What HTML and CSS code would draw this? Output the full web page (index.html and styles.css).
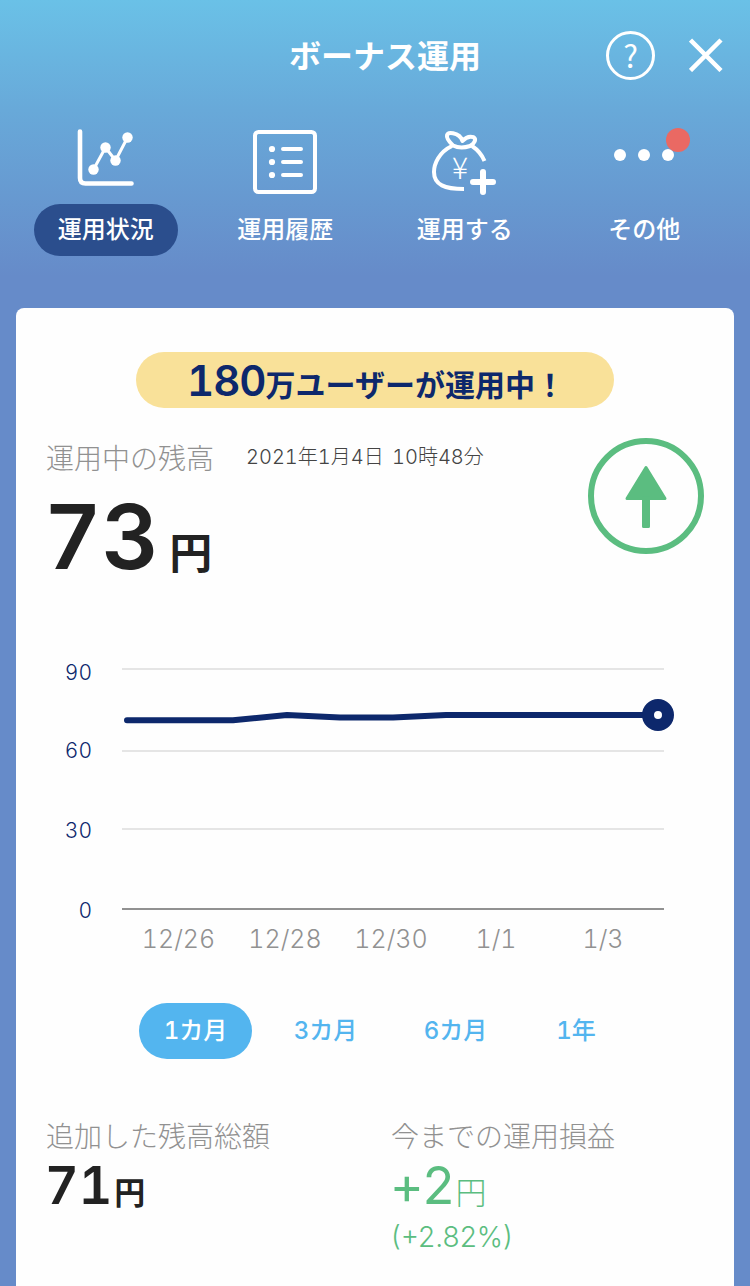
FILE: index.html
```html
<!DOCTYPE html>
<html lang="ja">

<head>
    <meta charset="UTF-8">
    <meta name="viewport" content="width=device-width, initial-scale=1.0">
    <title>ボーナス運用</title>
    <link rel="stylesheet" href="styles.css">
</head>

<body>
    <header class="header">
        <div class="title-bar">
            <h1 class="title">ボーナス運用</h1>
            <div class="title-actions">
                <button class="help">?</button>
                <button class="close">
                    <svg width="34" height="34" viewBox="0 0 34 34">
                        <path d="M1.500 2L32 32.500M32 2L1.500 32.500" />
                    </svg>
                </button>
            </div>
        </div>

        <nav class="menu">
            <a class="menu-item active">
                <svg class="menu-icon" width="72" height="72" viewBox="0 0 72 72">
                    <path class="line" d="M10 6.500V53Q10 58.500 15.500 58.500H61.500" stroke-width="4.600" />
                    <path class="line" d="M23.500 44.500L35.500 22.500L45.500 35.500L57.500 12.500" stroke-width="3" />
                    <circle cx="23.500" cy="44.500" r="5.200" />
                    <circle cx="35.500" cy="22.500" r="5.200" />
                    <circle cx="45.500" cy="35.500" r="5.200" />
                    <circle cx="57.500" cy="12.500" r="5.200" />
                </svg>
                <span class="menu-label">運用状況</span>
            </a>
            <a class="menu-item">
                <svg class="menu-icon" width="72" height="72" viewBox="0 0 72 72">
                    <rect class="line" x="6" y="7" width="60" height="60" rx="3.500" stroke-width="4" />
                    <circle cx="23" cy="24" r="3.100" />
                    <circle cx="23" cy="37" r="3.100" />
                    <circle cx="23" cy="50" r="3.100" />
                    <path class="line" d="M34 24H52M34 37H52M34 50H52" stroke-width="4" />
                </svg>
                <span class="menu-label">運用履歴</span>
            </a>
            <a class="menu-item">
                <svg class="menu-icon" width="72" height="72" viewBox="0 0 72 72">
                    <path class="line cut" d="M23 21C10 27 5 39 5 47C5 60 16 64 35 64M43 21C49 25 53 30 55.500 36" stroke-width="4" />
                    <path class="line" d="M24 20.500C14 11 18 7 24 8.300C30 9.500 32.500 13 33.500 16C37 12 41 11 44.500 12.200C47.500 14 46 18 41 21C35 23 29 23 24 20.500Z" stroke-width="4" />
                    <text class="yen" x="31" y="54" text-anchor="middle">¥</text>
                    <path class="line" d="M54 47V67M44 57H64" stroke-width="6" />
                </svg>
                <span class="menu-label">運用する</span>
            </a>
            <a class="menu-item">
                <svg class="menu-icon" width="72" height="72" viewBox="0 0 72 72">
                    <circle cx="12" cy="30" r="6" />
                    <circle cx="36" cy="30" r="6" />
                    <circle cx="60" cy="30" r="6" />
                </svg>
                <span class="badge"></span>
                <span class="menu-label">その他</span>
            </a>
        </nav>
    </header>

    <main class="card">
        <p class="users"><span class="users-num">180</span>万ユーザーが運用中！</p>

        <section class="balance">
            <div>
                <div class="balance-head">
                    <h2 class="label">運用中の残高</h2>
                    <time class="date">2021年1月4日 10時48分</time>
                </div>
                <p class="balance-value">73<span class="yen-unit">円</span></p>
            </div>
            <svg class="trend" width="116" height="116" viewBox="0 0 116 116">
                <circle cx="58" cy="58" r="55" />
                <path d="M58 29.500L77 60.500H39Z" />
                <path d="M55.500 60H60.500V88.500H55.500Z" />
            </svg>
        </section>

        <svg class="chart" width="718" height="340" viewBox="0 0 718 340">
            <g class="grid">
                <path d="M106 31H648M106 113H648M106 191H648" />
                <path class="axis" d="M106 271H648" />
            </g>
            <g class="y-labels">
                <text x="76" y="42">90</text>
                <text x="76" y="120">60</text>
                <text x="76" y="200">30</text>
                <text x="76" y="280">0</text>
            </g>
            <g class="x-labels">
                <text x="162.500" y="310">12/26</text>
                <text x="269" y="310">12/28</text>
                <text x="375" y="310">12/30</text>
                <text x="480" y="310">1/1</text>
                <text x="587" y="310">1/3</text>
            </g>
            <polyline class="series" points="111,82.200 217,82.200 271,77 324,79.600 377,79.600 430,77 642,77" />
            <circle class="point" cx="642" cy="77" r="10" />
        </svg>

        <div class="periods">
            <button class="period selected">1カ月</button>
            <button class="period">3カ月</button>
            <button class="period">6カ月</button>
            <button class="period year">1年</button>
        </div>

        <section class="summary">
            <div class="summary-item">
                <h2 class="label">追加した残高総額</h2>
                <p class="amount">71<span class="amount-unit">円</span></p>
            </div>
            <div class="summary-item">
                <h2 class="label">今までの運用損益</h2>
                <p class="amount plus">+2<span class="amount-unit">円</span></p>
                <p class="rate">(+2.82%)</p>
            </div>
        </section>
    </main>
</body>

</html>
```
FILE: styles.css
```css
* {
    box-sizing: border-box;
}

body {
    height: 1286px;
    margin: 0;
    padding: 0 16px;
    overflow: hidden;
    background: #668bc9;
    background-image: linear-gradient(#6ac1e7 0, #68a9d9 110px, #668bc9 276px);
    background-repeat: no-repeat;
    font-family: "Inter", "Noto Sans CJK JP", sans-serif;
    font-variant-numeric: tabular-nums;
    color: #222;
}

h1,
h2,
p {
    margin: 0;
    font-weight: normal;
}

button {
    padding: 0;
    border: 0;
    background: none;
    font-family: inherit;
    font-variant-numeric: inherit;
    color: inherit;
}

/* header */
.header {
    height: 308px;
    margin: 0 -16px;
    color: #fff;
}

.title-bar {
    display: grid;
    grid-template-columns: 1fr 270px;
    align-items: center;
    height: 110px;
    padding-left: 289px;
}

.title {
    padding-top: 3px;
    font-size: 32px;
    font-weight: 700;
    line-height: 48px;
    white-space: nowrap;
}

.title-actions {
    display: flex;
    justify-content: flex-end;
    align-items: center;
    gap: 34px;
    padding-right: 28px;
}

.help {
    width: 49px;
    height: 49px;
    border: 3.5px solid #fff;
    border-radius: 50%;
    font-family: "Noto Sans CJK JP", sans-serif;
    font-size: 31px;
    line-height: 38px;
}

.close {
    display: flex;
}

.close path {
    stroke: #fff;
    stroke-width: 4.5;
}

.menu {
    display: grid;
    grid-template-columns: repeat(4, 144px);
    justify-content: center;
    column-gap: 35.5px;
    padding-top: 15px;
}

.menu-item {
    position: relative;
    display: flex;
    flex-direction: column;
    align-items: center;
    gap: 7px;
}

.menu-icon {
    fill: #fff;
}

.menu-icon .line {
    fill: none;
    stroke: #fff;
    stroke-linecap: round;
    stroke-linejoin: round;
}

.menu-icon .cut {
    stroke-linecap: butt;
}

.yen {
    font-family: "Noto Sans CJK JP", sans-serif;
    font-size: 30px;
    font-weight: 300;
}

.menu-label {
    width: 144px;
    height: 52px;
    border-radius: 26px;
    text-align: center;
    font-size: 24px;
    font-weight: 500;
    line-height: 52px;
}

.active .menu-label {
    background: #2b4e8d;
}

.badge {
    position: absolute;
    top: 3px;
    left: 94px;
    width: 24px;
    height: 24px;
    border-radius: 50%;
    background: #ea6963;
}

/* card */
.card {
    height: 978px;
    padding-top: 44px;
    border-radius: 8px 8px 0 0;
    background: #fefefe;
}

.users {
    width: 478px;
    height: 56px;
    margin: 0 auto;
    padding-left: 51px;
    border-radius: 28px;
    background: #f9e199;
    color: #0d286c;
    font-size: 30px;
    font-weight: 700;
    line-height: 58px;
    white-space: nowrap;
}

.users-num {
    font-size: 42px;
    font-weight: 600;
    letter-spacing: -1px;
}

.balance {
    display: flex;
    justify-content: space-between;
    height: 230px;
    padding: 30px 30px 0;
}

.balance-head {
    display: flex;
    align-items: center;
    gap: 32px;
    height: 40px;
}

.label {
    padding-top: 2px;
    color: #919191;
    font-size: 28px;
    font-weight: 300;
    line-height: 40px;
}

.date {
    padding-bottom: 6px;
    color: #444;
    font-size: 20px;
    font-weight: 300;
    word-spacing: 3px;
    white-space: nowrap;
}

.balance-value {
    margin-left: -2px;
    font-size: 89px;
    font-weight: 600;
    line-height: 118px;
}

.yen-unit {
    margin-left: 10px;
    font-size: 43px;
    font-weight: 700;
}

.trend circle {
    fill: none;
    stroke: #5bbd80;
    stroke-width: 6;
}

.trend path {
    fill: #5bbd80;
    stroke: #5bbd80;
    stroke-width: 3;
    stroke-linejoin: round;
}

/* chart */
.chart {
    display: block;
}

.grid path {
    stroke: #e5e5e5;
    stroke-width: 2;
}

.grid .axis {
    stroke: #919191;
}

.y-labels {
    fill: #0d286c;
    font-size: 21px;
    font-weight: 300;
    text-anchor: end;
}

.x-labels {
    fill: #919191;
    font-size: 25px;
    font-weight: 300;
    text-anchor: middle;
}

.series {
    fill: none;
    stroke: #0d286c;
    stroke-width: 6;
    stroke-linecap: round;
    stroke-linejoin: round;
}

.point {
    fill: #fff;
    stroke: #0d286c;
    stroke-width: 12;
}

.periods {
    display: flex;
    gap: 17px;
    padding: 25px 0 0 123px;
}

.period {
    width: 113px;
    height: 56px;
    border-radius: 28px;
    color: #53b5ef;
    font-size: 24px;
    font-weight: 500;
    line-height: 54px;
}

.year {
    width: 94px;
}

.selected {
    background: #53b5ef;
    color: #fff;
}

.summary {
    display: grid;
    grid-template-columns: 345px 1fr;
    padding: 56px 30px 0;
}

.amount {
    height: 60px;
    margin-left: -1px;
    font-size: 52px;
    font-weight: 600;
    line-height: 57px;
}

.amount-unit {
    margin-left: 2px;
    font-size: 31px;
    font-weight: 700;
}

.plus,
.rate {
    color: #5bbd80;
}

.plus,
.plus .amount-unit {
    font-weight: 400;
}

.plus .amount-unit {
    font-weight: 300;
}

.plus {
    letter-spacing: -2px;
}

.rate {
    font-size: 28px;
    font-weight: 300;
    font-variant-numeric: normal;
    line-height: 40px;
}
```
